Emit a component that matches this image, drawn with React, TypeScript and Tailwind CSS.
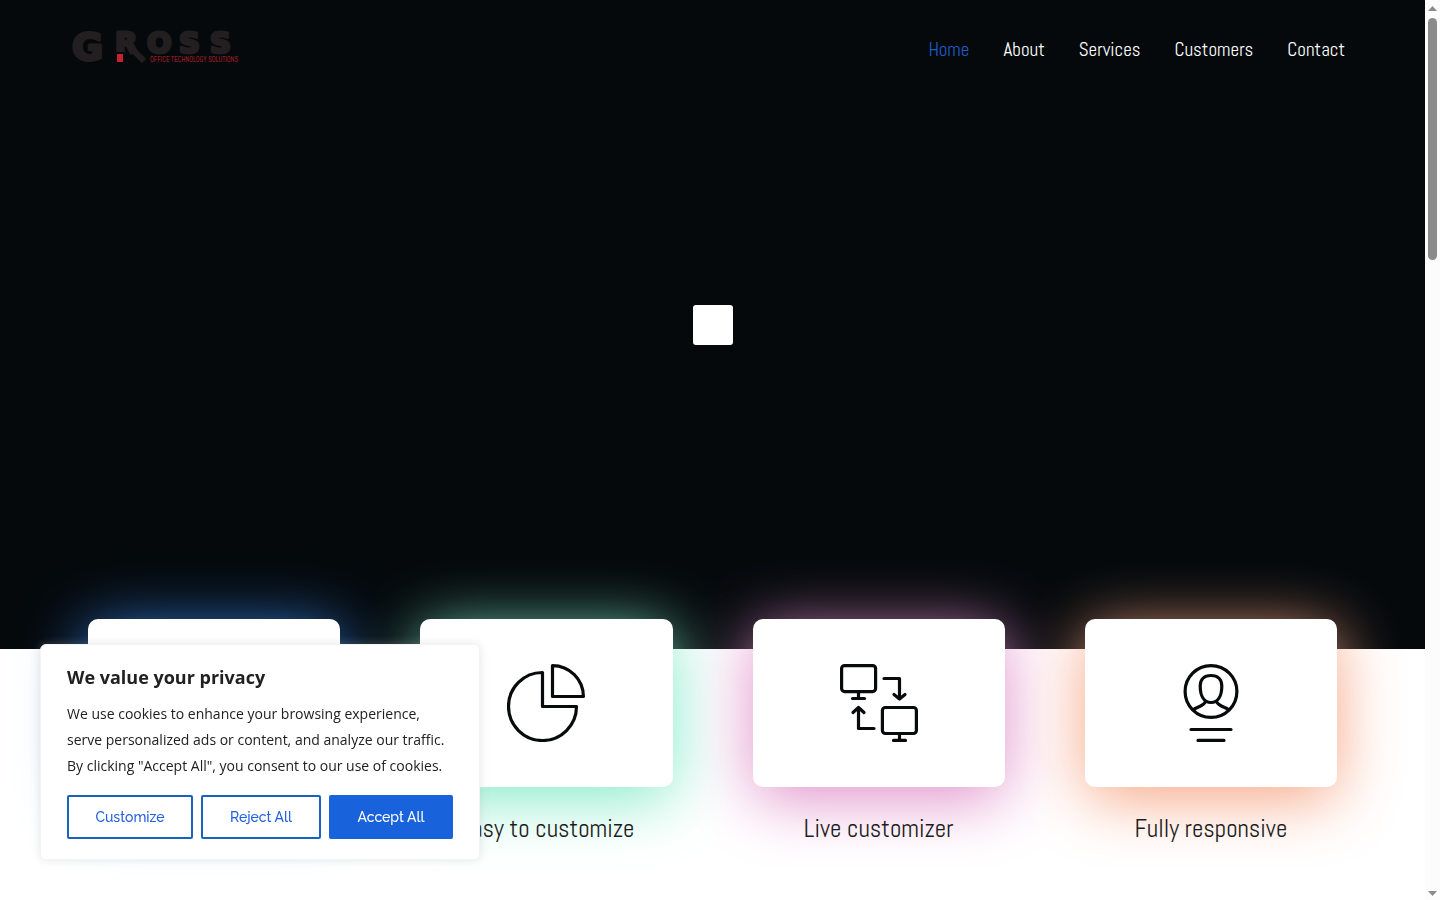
import type { ReactNode } from "react";

const navItems = ["Home", "About", "Services", "Customers", "Contact"];

function Logo() {
  return (
    <svg viewBox="0 0 170 40" className="h-10 w-[170px] overflow-visible" role="img" aria-label="Gross Office Technology Solutions">
      <g fill="#231f20" stroke="#231f20" strokeWidth="3" strokeLinejoin="round" fontFamily="'DejaVu Sans', sans-serif" fontWeight="700">
        <text x="2" y="34" fontSize="38">G</text>
        <g fontSize="29">
          <text x="45" y="27">R</text>
          <text x="77" y="27">O</text>
          <text x="109" y="27">S</text>
          <text x="140" y="27">S</text>
        </g>
      </g>
      <path d="M64 25L74 35" stroke="#231f20" strokeWidth="6" />
      <rect x="45" y="26" width="10" height="10" fill="#05090c" />
      <rect x="47" y="28" width="6" height="8" fill="#c4242f" />
      <text x="80" y="36" fontSize="7" fill="#c4242f" fontFamily="Abel, 'Liberation Sans Narrow', sans-serif">
        OFFICE TECHNOLOGY SOLUTIONS
      </text>
    </svg>
  );
}

function Icon({ children }: { children: ReactNode }) {
  return (
    <svg viewBox="0 0 78 78" className="size-[78px]" fill="none" stroke="#080a0b" strokeWidth="3.2" strokeLinecap="round" strokeLinejoin="round" aria-hidden="true">
      {children}
    </svg>
  );
}

type Feature = { title?: string; glow: string; icon?: ReactNode };

const features: Feature[] = [
  {
    glow: "shadow-[0_12px_64px_rgb(58,140,245)]",
  },
  {
    title: "Easy to customize",
    glow: "shadow-[0_12px_64px_rgb(130,234,200)]",
    icon: (
      <Icon>
        <path d="M35.500 8.500A34 34 0 1 0 69.500 42.500H35.500Z" />
        <path d="M45.500 1.600V32.500H76.400A31 31 0 0 0 45.500 1.600Z" />
      </Icon>
    ),
  },
  {
    title: "Live customizer",
    glow: "shadow-[0_12px_64px_rgb(224,143,202)]",
    icon: (
      <Icon>
        <rect x="1.600" y="1.600" width="34" height="26" rx="3" />
        <path d="M18.500 28V34M12.500 34.500H24.500" />
        <path d="M44 14.500H59.500V35M54 30.500L59.500 35L65 30.500" />
        <rect x="42.400" y="43.500" width="34" height="26" rx="3" />
        <path d="M59.500 70V76M53.500 76.400H65.500" />
        <path d="M34 64.500H18.500V44M13 48.500L18.500 43.500L24 48.500" />
      </Icon>
    ),
  },
  {
    title: "Fully responsive",
    glow: "shadow-[0_12px_64px_rgb(246,165,132)]",
    icon: (
      <Icon>
        <circle cx="39" cy="27.500" r="25.900" />
        <path d="M39 11.500C32 11.500 28.200 15.500 28.200 22C28.200 32 32 38.500 39 38.500S49.800 32 49.800 22C49.800 15.500 46 11.500 39 11.500Z" />
        <path d="M33.500 37.500C32 42 25 43 21.500 45.500M44.500 37.500C46 42 53 43 56.500 45.500" />
        <path d="M19 65.500H59M26 76.400H52" />
      </Icon>
    ),
  },
];

function CookieBanner() {
  return (
    <section aria-label="Cookie consent" className="fixed bottom-10 left-10 z-10 w-[440px] rounded-md border border-[#f4f4f4] bg-white px-[26px] py-5 font-['Open_Sans',sans-serif] text-[#212121] shadow-[0_0_10px_rgba(172,171,171,0.3)]">
      <h2 className="text-lg leading-6 font-bold">We value your privacy</h2>
      <p className="mt-3 text-sm leading-[26px]">
        We use cookies to enhance your browsing experience, serve personalized ads or content, and analyze our traffic. By clicking "Accept All", you consent to our use of cookies.
      </p>
      <div className="mt-4 flex gap-2 font-['Raleway','Lato',sans-serif] text-sm font-medium whitespace-nowrap">
        <button type="button" className="h-11 w-[126px] rounded-xs border-2 border-[#1863bc] bg-white text-[#2560dc]">Customize</button>
        <button type="button" className="h-11 w-[120px] rounded-xs border-2 border-[#1863bc] bg-white text-[#2560dc]">Reject All</button>
        <button type="button" className="h-11 flex-1 rounded-xs border-2 border-[#1863dc] bg-[#1863dc] text-white">Accept All</button>
      </div>
    </section>
  );
}

function ScrollBar() {
  return (
    <div aria-hidden="true" className="flex w-[15px] shrink-0 flex-col items-center bg-[#fcfcfc] pt-1.5 pb-[7px]">
      <svg viewBox="0 0 9 5" className="h-[5px] w-[9px]" fill="#8b8b8b"><path d="M0 5L4.500 0L9 5Z" /></svg>
      <div className="mt-[7px] h-[242px] w-[9px] rounded-full bg-[#8b8b8b]" />
      <svg viewBox="0 0 9 5" className="mt-auto h-[5px] w-[9px]" fill="#8b8b8b"><path d="M0 0L4.500 5L9 0Z" /></svg>
    </div>
  );
}

export default function App() {
  return (
    <div className="flex min-h-screen bg-white font-['Abel','Liberation_Sans_Narrow','Roboto',sans-serif]">
      <div className="min-w-0 flex-1 overflow-hidden">
        <div className="flex h-[649px] flex-col bg-[#05090c]">
          <header className="flex h-[100px] items-center justify-between pr-20 pl-[70px]">
            <a href="#home" className="-mt-2"><Logo /></a>
            <nav className="flex gap-[34px] text-[19px] leading-7 text-white">
              {navItems.map((item, i) => (
                <a key={item} href={`#${item.toLowerCase()}`} className={i === 0 ? "text-[#1d5bc4]" : ""}>
                  {item}
                </a>
              ))}
            </nav>
          </header>
          <div className="flex flex-1 justify-center pt-[205px]">
            <div className="size-10 rounded-[3px] bg-white" />
          </div>
        </div>
        <main className="-mt-[30px] grid grid-cols-4 px-12 pb-14">
          {features.map((f) => (
            <article key={f.glow} className="px-10 text-center">
              <div className={`flex h-[168px] items-center justify-center rounded-[10px] bg-white ${f.glow}`}>{f.icon}</div>
              {f.title && (
                <h3 className="relative mt-6 text-[25px] leading-9 whitespace-nowrap text-[#1d1d1d]">{f.title}</h3>
              )}
            </article>
          ))}
        </main>
      </div>
      <ScrollBar />
      <CookieBanner />
    </div>
  );
}
